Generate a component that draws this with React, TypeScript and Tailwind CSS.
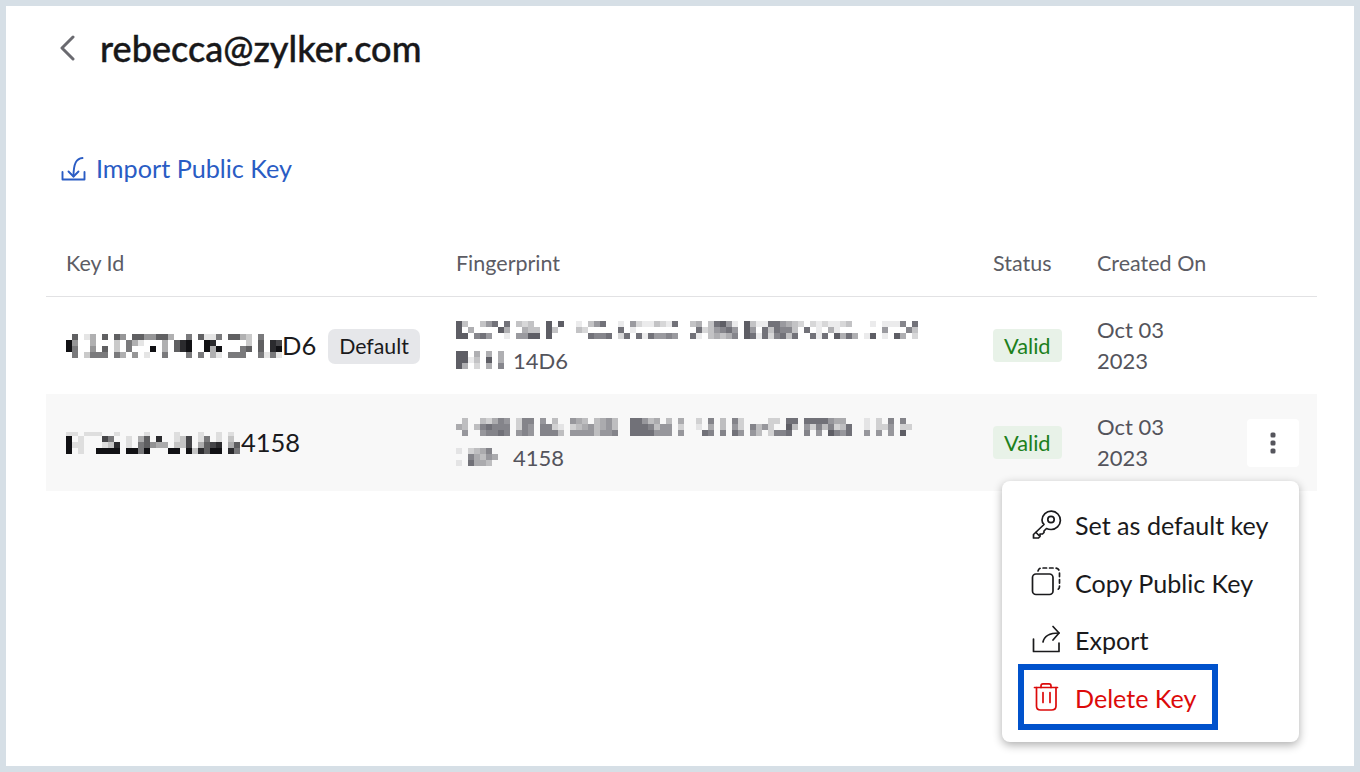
import { ReactNode } from "react";

// redacted values: each char is a darkness step 0-9, "." is blank
const KEY1 = [
  ".6.13.6.64.6644663..5.6115.6632.5...",
  "94..3...2.531...3.689..98.....2.6.87",
  "95..4.6.2.5...9.3.689..939...56.6.89",
  ".5.2555.53.4.1..5...5.5.31.555..5151",
];
const KEY2 = [
  "11.111..1....1....1...1..1.1.",
  "9.1...75..1.36.8..127.15.1.2.",
  "911...128.1.56433.227.3678.36",
  "9.1..9999.9959...99.928699.85",
];
const FP1A = [
  "83..357.7.323..8.8..1.357..1.52113217.." + "34.37851.8311775432.2121123...1.1116.7",
  "8.4....84..433.83...32.....7.1........." + ".7235675.85.737663.7.1.41.......5...63",
  "88.675..1.5588.8......7667.27.7175565.." + "71.34346.871726737..717.8474.18.1.84.2",
];
const FP1B = ["88.4.4.4", "8813.8.4", "84.2.4.6"];
const FP2A = [
  ".3..32465.266.5.3..543.3453..77534.3.4." + ".2.6.3.62....22.77.7777544...1.2.6.6.",
  "43.367666.265.6621.23453453..7776355.2." + ".1.4.3.52.6352..83.52636237..1.225.22",
  ".5..56676.565.6663.55553556..7777555.5." + "..76.6.75.53.2667..6.5.8657..5.5.5.8.",
];
const FP2B = ["1.2346..", "..64354.", "1.7443.."];

function Pixels({
  rows,
  tone,
  offset = 0,
}: {
  rows: string[];
  tone: string;
  offset?: number;
}) {
  const cols = Math.max(...rows.map((r) => r.length));
  const h = rows.length * 6 - offset;
  return (
    <svg width={cols * 6} height={h} viewBox={`0 ${offset} ${cols * 6} ${h}`} className="block shrink-0">
      {rows.map((row, y) =>
        row.split("").map((c, x) => {
          const d = Number(c);
          if (c === "." || !d) return null;
          return <rect key={`${y}-${x}`} x={x * 6} y={y * 6} width="6" height="6" fill={tone} opacity={d / 9} />;
        }),
      )}
    </svg>
  );
}

function Valid() {
  return (
    <span className="inline-block rounded-[4px] bg-[#e8f2e8] px-[11px] py-[3px] align-middle text-[21.8px] leading-[27px] text-[#1c801c]">
      Valid
    </span>
  );
}

function MenuItem({ icon, label, red }: { icon: ReactNode; label: string; red?: boolean }) {
  return (
    <div className={`flex h-[57.5px] items-center gap-[14px] ${red ? "text-[#dc0a0a]" : "text-[#1a1a1c]"}`}>
      {icon}
      <span className="text-[25.1px] leading-none">{label}</span>
    </div>
  );
}

const iconProps = {
  width: 30,
  height: 30,
  viewBox: "0 0 30 30",
  fill: "none",
  stroke: "currentColor",
  strokeWidth: 1.7,
  strokeLinecap: "round" as const,
  strokeLinejoin: "round" as const,
  className: "shrink-0 overflow-visible",
};

function Row({
  shaded,
  id,
  fingerprint,
  action,
}: {
  shaded?: boolean;
  id: ReactNode;
  fingerprint: ReactNode;
  action?: ReactNode;
}) {
  return (
    <div className={`grid h-[97px] grid-cols-[390px_537px_104px_1fr] items-center pl-5 ${shaded ? "bg-[#f8f8f8]" : ""}`}>
      <div className="flex items-center text-[25.5px] text-[#1a1a1c]">{id}</div>
      <div className="text-[22px] text-[#54545c]">{fingerprint}</div>
      <div>
        <Valid />
      </div>
      <div className="flex items-center justify-between pr-[18px]">
        <div className="text-[22px] leading-[30.5px] text-[#54545c]">
          Oct 03
          <br />
          2023
        </div>
        {action}
      </div>
    </div>
  );
}

export default function App() {
  return (
    <div className="h-[772px] bg-[#d6dfe6] p-[6px] font-['Lato','Liberation_Sans',sans-serif]">
      <div className="h-full bg-white pl-10 pr-[37px]">
        <div className="flex h-[88px] items-center pb-[4px] pl-[13px]">
          <svg width="16" height="26" viewBox="0 0 16 26" fill="none" stroke="#6a6a70" strokeWidth="3" strokeLinecap="round" strokeLinejoin="round">
            <path d="M14 2 3 13l11 11" />
          </svg>
          <h1 className="ml-[25px] text-[36.1px] leading-none font-medium text-[#18181a] [-webkit-text-stroke:0.4px_#18181a]">
            rebecca@zylker.com
          </h1>
        </div>

        <div className="mt-[56px] flex items-center pl-[15px] text-[#2a5cc4]">
          <svg width="25" height="25" viewBox="0 0 25 25" fill="none" stroke="currentColor" strokeWidth="1.9" strokeLinecap="round" strokeLinejoin="round">
            <path d="M1.500 16v7.500h22V16" />
            <path d="M21.500 2C15.500 2.500 12.500 7 12.500 20.500" />
            <path d="m7.500 15.500 5 5 5-5" />
          </svg>
          <span className="ml-[10px] text-[25.2px] leading-[36px]">Import Public Key</span>
        </div>

        <div className="relative mt-[44px]">
          <div className="grid h-[67px] grid-cols-[390px_537px_104px_1fr] items-center border-b border-[#e2e2e4] pl-5 text-[21.5px] text-[#5c5c64]">
            <span>Key Id</span>
            <span>Fingerprint</span>
            <span>Status</span>
            <span>Created On</span>
          </div>

          <Row
            id={
              <>
                <Pixels rows={KEY1} tone="#111114" />
                <span>D6</span>
                <span className="mt-[1px] ml-3 rounded-[7px] bg-[#e6e7ea] px-[11px] py-[3px] text-[21.3px] leading-[29px]">Default</span>
              </>
            }
            fingerprint={
              <>
                <Pixels rows={FP1A} tone="#4a4a52" />
                <div className="mt-[11px] flex h-[20px] items-center">
                  <Pixels rows={FP1B} tone="#4a4a52" />
                  <span className="ml-[9px]">14D6</span>
                </div>
              </>
            }
          />

          <Row
            shaded
            id={
              <>
                <Pixels rows={KEY2} tone="#111114" offset={2} />
                <span className="ml-[1px]">4158</span>
              </>
            }
            fingerprint={
              <>
                <Pixels rows={FP2A} tone="#4a4a52" />
                <div className="mt-[11px] flex h-[20px] items-center">
                  <Pixels rows={FP2B} tone="#4a4a52" />
                  <span className="ml-[9px]">4158</span>
                </div>
              </>
            }
            action={
              <button className="flex h-12 w-[52px] items-center justify-center rounded-[4px] bg-white">
                <svg width="6" height="22" viewBox="0 0 6 22" fill="#55555c">
                  <rect x="0.5" y="0.5" width="5" height="5" rx="1.5" />
                  <rect x="0.5" y="8.5" width="5" height="5" rx="1.5" />
                  <rect x="0.5" y="16.5" width="5" height="5" rx="1.5" />
                </svg>
              </button>
            }
          />

          <div className="absolute top-[251px] right-[18px] h-[261px] w-[297px] rounded-lg bg-white pt-[16px] pl-[29px] shadow-[0_3px_10px_rgba(0,0,0,0.32)]">
            <MenuItem
              label="Set as default key"
              icon={
                <svg {...iconProps}>
                  <g transform="translate(0.5 -2)">
                    <path d="M12.500 15.500 2 25.500V29h5l1.500-1.500V25H11l1.500-1.500V22l2.500-2.500c1.500.8 3 1 4.500 1A9.200 9.200 0 1 0 10.500 11c0 1.700.5 3.200 2 4.500Z" />
                    <circle cx="19.500" cy="10.500" r="3.200" />
                    <path d="m4.500 23.500 3 3" />
                  </g>
                </svg>
              }
            />
            <MenuItem
              label="Copy Public Key"
              icon={
                <svg {...iconProps}>
                  <g transform="translate(0 -1.500)">
                    <rect x="1.500" y="7.500" width="20.500" height="20.500" rx="3.500" />
                    <path d="M7 4.500C7.500 2.800 8.500 1.800 10 1.500h14c2.500 0 4.500 1.500 4.500 4.500v14c0 1.800-1 3-3 3.500" strokeDasharray="3.500 3" />
                  </g>
                </svg>
              }
            />
            <MenuItem
              label="Export"
              icon={
                <svg {...iconProps}>
                  <path d="M2.500 13v12.500H28V17" />
                  <path d="M12 16c1-5 6-9 16-9" />
                  <path d="M22 .5 28 7l-6 7" />
                </svg>
              }
            />
            <MenuItem
              red
              label="Delete Key"
              icon={
                <svg {...iconProps}>
                  <path d="M3.500 4.500h23" />
                  <path d="M10 4.500V3C10 1.700 10.800.8 12 .8h6c1.200 0 2 .9 2 2.200v1.500" />
                  <path d="M5.500 4.500V23c0 2.500 1.500 4 4 4h11c2.500 0 4.500-1.500 4.500-4V4.500" />
                  <path d="M12 9.500v10M19 9.500v10" />
                </svg>
              }
            />
          </div>

          <div className="absolute top-[434px] right-[99px] h-[66px] w-[200px] border-[6px] border-[#0052cc]" />
        </div>
      </div>
    </div>
  );
}
